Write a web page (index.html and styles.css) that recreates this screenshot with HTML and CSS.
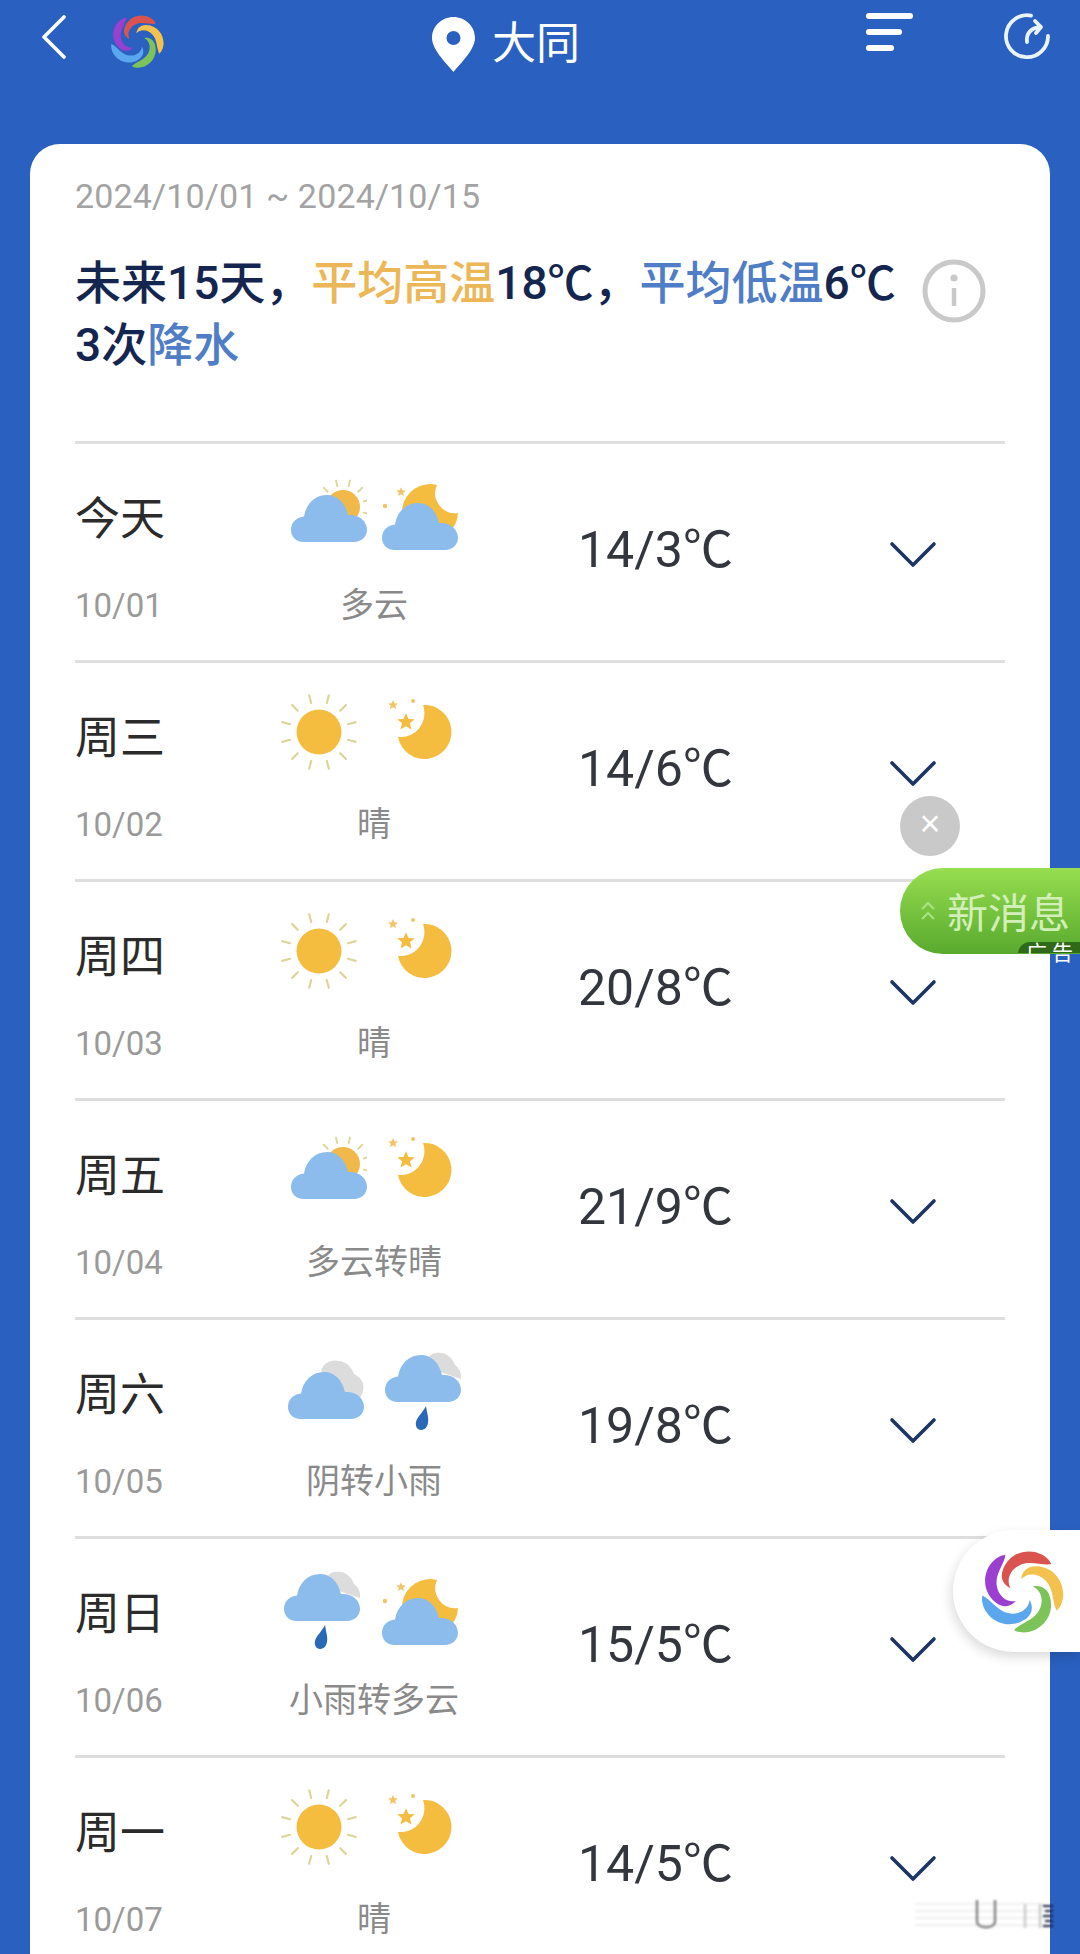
FILE: index.html
```html
<!DOCTYPE html>
<html lang="zh">
<head>
<meta charset="utf-8">
<title>大同 15天天气</title>
<link rel="stylesheet" href="styles.css">
</head>
<body>
<svg class="defs" width="0" height="0" aria-hidden="true">
  <defs>
    <path id="cloud" d="M12.5 47C5 47 0 41.5 0 35C0 27 6 22 13 21.5C15 9 24 0 36 0C46 0 54 7 57 20C68 19 76 26 76 35C76 42 70 47 63 47Z"/>
    <path id="star" d="M0 -8L2.3 -2.8L8 -2.5L3.6 1.2L5 6.8L0 3.8L-5 6.8L-3.6 1.2L-8 -2.5L-2.3 -2.8Z"/>
    <path id="blade" d="M85 -78C62 -126 -28 -132 -55 -62C-65 -36 -52 -16 -33 -8C-46 -30 -36 -60 -8 -74C22 -90 60 -72 85 -78Z"/>
    <g id="swirl">
      <use href="#blade" fill="#d9534f"/>
      <use href="#blade" fill="#f2c14e" transform="rotate(72)"/>
      <use href="#blade" fill="#7cc35a" transform="rotate(144)"/>
      <use href="#blade" fill="#5aa7ee" transform="rotate(216)"/>
      <use href="#blade" fill="#9a3fd0" transform="rotate(288)"/>
    </g>
    <g id="rays">
      <line x1="0" y1="-30" x2="0" y2="-38" transform="rotate(15)"/>
      <line x1="0" y1="-30" x2="0" y2="-38" transform="rotate(45)"/>
      <line x1="0" y1="-30" x2="0" y2="-38" transform="rotate(75)"/>
      <line x1="0" y1="-30" x2="0" y2="-38" transform="rotate(105)"/>
      <line x1="0" y1="-30" x2="0" y2="-38" transform="rotate(135)"/>
      <line x1="0" y1="-30" x2="0" y2="-38" transform="rotate(165)"/>
      <line x1="0" y1="-30" x2="0" y2="-38" transform="rotate(195)"/>
      <line x1="0" y1="-30" x2="0" y2="-38" transform="rotate(225)"/>
      <line x1="0" y1="-30" x2="0" y2="-38" transform="rotate(255)"/>
      <line x1="0" y1="-30" x2="0" y2="-38" transform="rotate(285)"/>
      <line x1="0" y1="-30" x2="0" y2="-38" transform="rotate(315)"/>
      <line x1="0" y1="-30" x2="0" y2="-38" transform="rotate(345)"/>
    </g>
    <symbol id="i-sun" viewBox="0 0 96 96">
      <use href="#rays" transform="translate(48 48)" stroke="#dcd699" stroke-width="2.2" stroke-linecap="round"/>
      <circle cx="48" cy="48" r="22.5" fill="#f5bd40"/>
    </symbol>
    <symbol id="i-moon" viewBox="0 0 96 96">
      <path d="M46 21A27 27 0 1 1 21 53A24 24 0 0 0 46 21Z" fill="#f5bd40"/>
      <use href="#star" transform="translate(29 38) scale(1.1)" fill="#f5bd40"/>
      <use href="#star" transform="translate(16 21) scale(.62)" fill="#f0c566"/>
      <circle cx="36" cy="17" r="2" fill="#f0c566"/>
    </symbol>
    <symbol id="i-cloud-sun" viewBox="0 0 96 96">
      <use href="#rays" transform="translate(72 42) scale(.72)" stroke="#dcd699" stroke-width="2.6" stroke-linecap="round"/>
      <circle cx="72" cy="42" r="17" fill="#f0b94a"/>
      <use href="#cloud" x="20" y="30" fill="#8bbcec"/>
    </symbol>
    <symbol id="i-cloud-moon" viewBox="0 0 96 96">
      <path d="M60 20A28 28 0 1 0 81 48A20 20 0 0 1 60 20Z" fill="#f5bd40"/>
      <use href="#star" transform="translate(24 27) scale(.6)" fill="#f0c566"/>
      <circle cx="8" cy="41" r="2.2" fill="#f0c566"/>
      <use href="#cloud" x="5" y="38" fill="#8bbcec"/>
    </symbol>
    <symbol id="i-overcast" viewBox="0 0 96 96">
      <path d="M50 30C52 22 60 18 68 20C76 21 81 27 83 33C90 36 94 43 92 50C91 56 86 60 80 62L60 50Z" fill="#dcdcdc"/>
      <use href="#cloud" x="17" y="31" fill="#8bbcec"/>
    </symbol>
    <symbol id="i-rain" viewBox="0 0 96 96">
      <path d="M52 16C54 12 60 11 65 12C71 13 76 18 78 24C82 27 85 32 84 38L60 30Z" fill="#dcdcdc"/>
      <use href="#cloud" x="8" y="14" fill="#8bbcec"/>
      <path d="M49 65C50 72 52 77 51 82C50 87 47 89 44 89C41 89 38 86 39 81C40 76 46 71 49 65Z" fill="#2a68b8"/>
    </symbol>
    <symbol id="i-chevron" viewBox="0 0 48 28">
      <path d="M3 3L24 24L45 3" fill="none" stroke="#1d3563" stroke-width="3.6" stroke-linecap="round" stroke-linejoin="round"/>
    </symbol>
  </defs>
</svg>

<header class="topbar">
  <svg class="back" viewBox="0 0 24 44"><path d="M22 2L2 22L22 42"/></svg>
  <svg class="top-logo" viewBox="-130 -130 260 260"><use href="#swirl"/></svg>
  <div class="place">
    <svg class="pin" viewBox="0 0 43 55"><path fill-rule="evenodd" d="M21.5 0C33 0 43 9 43 21C43 32 30 45 21.5 55C13 45 0 32 0 21C0 9 10 0 21.5 0ZM21.5 14A7 7 0 1 0 21.5 28A7 7 0 1 0 21.5 14Z"/></svg>
    <span class="city">大同</span>
  </div>
  <div class="menu"><i class="bar bar-l"></i><i class="bar bar-m"></i><i class="bar bar-s"></i></div>
  <svg class="refresh" viewBox="0 0 48 48"><path d="M28 3.6A21 21 0 1 0 45 24"/><path d="M24 30C23 21 28 16 37 15M32 9L38 15L33 21"/></svg>
</header>

<main class="card">
  <section class="summary">
    <p class="range">2024/10/01 ~ 2024/10/15</p>
    <div class="headline">
      <p class="headline-text">未来15天，<span class="hot">平均高温</span>18℃，<span class="cool">平均低温</span>6℃<br>3次<span class="cool">降水</span></p>
      <svg class="info" viewBox="0 0 64 64"><circle cx="32" cy="32" r="29"/><circle class="info-dot" cx="32" cy="19" r="3.6"/><path d="M32 29V47"/></svg>
    </div>
  </section>

  <ul class="days">
    <li class="day">
      <div class="when"><span class="name">今天</span><span class="date">10/01</span></div>
      <div class="weather"><div class="icons"><svg class="slot"><use href="#i-cloud-sun"/></svg><svg class="slot"><use href="#i-cloud-moon"/></svg></div><span class="desc">多云</span></div>
      <div class="temp">14/3℃</div>
      <svg class="chev"><use href="#i-chevron"/></svg>
    </li>
    <li class="day">
      <div class="when"><span class="name">周三</span><span class="date">10/02</span></div>
      <div class="weather"><div class="icons"><svg class="slot"><use href="#i-sun"/></svg><svg class="slot"><use href="#i-moon"/></svg></div><span class="desc">晴</span></div>
      <div class="temp">14/6℃</div>
      <svg class="chev"><use href="#i-chevron"/></svg>
    </li>
    <li class="day">
      <div class="when"><span class="name">周四</span><span class="date">10/03</span></div>
      <div class="weather"><div class="icons"><svg class="slot"><use href="#i-sun"/></svg><svg class="slot"><use href="#i-moon"/></svg></div><span class="desc">晴</span></div>
      <div class="temp">20/8℃</div>
      <svg class="chev"><use href="#i-chevron"/></svg>
    </li>
    <li class="day">
      <div class="when"><span class="name">周五</span><span class="date">10/04</span></div>
      <div class="weather"><div class="icons"><svg class="slot"><use href="#i-cloud-sun"/></svg><svg class="slot"><use href="#i-moon"/></svg></div><span class="desc">多云转晴</span></div>
      <div class="temp">21/9℃</div>
      <svg class="chev"><use href="#i-chevron"/></svg>
    </li>
    <li class="day">
      <div class="when"><span class="name">周六</span><span class="date">10/05</span></div>
      <div class="weather"><div class="icons"><svg class="slot"><use href="#i-overcast"/></svg><svg class="slot"><use href="#i-rain"/></svg></div><span class="desc">阴转小雨</span></div>
      <div class="temp">19/8℃</div>
      <svg class="chev"><use href="#i-chevron"/></svg>
    </li>
    <li class="day">
      <div class="when"><span class="name">周日</span><span class="date">10/06</span></div>
      <div class="weather"><div class="icons"><svg class="slot slot-nudge"><use href="#i-rain"/></svg><svg class="slot"><use href="#i-cloud-moon"/></svg></div><span class="desc">小雨转多云</span></div>
      <div class="temp">15/5℃</div>
      <svg class="chev"><use href="#i-chevron"/></svg>
    </li>
    <li class="day">
      <div class="when"><span class="name">周一</span><span class="date">10/07</span></div>
      <div class="weather"><div class="icons"><svg class="slot"><use href="#i-sun"/></svg><svg class="slot"><use href="#i-moon"/></svg></div><span class="desc">晴</span></div>
      <div class="temp">14/5℃</div>
      <svg class="chev"><use href="#i-chevron"/></svg>
    </li>
  </ul>
</main>

<div class="ad-close">×</div>
<div class="ad-pill">
  <svg class="ad-arrows" viewBox="0 0 16 24"><path d="M2 10L8 4L14 10M2 20L8 14L14 20"/></svg>
  <span class="ad-text">新消息</span>
  <span class="ad-tag">广告</span>
</div>
<div class="float-logo"><svg class="float-swirl" viewBox="-130 -130 260 260"><use href="#swirl"/></svg></div>
<svg class="smear" viewBox="0 0 140 40">
  <path class="smear-f" d="M0 6H130M0 13H130M0 20H130M0 27H130"/>
  <path class="smear-u" d="M62 2V24C63 31 79 31 80 24V2"/>
  <path class="smear-s" d="M110 6V30M125 6V30"/>
  <path class="smear-k" d="M128 8H138M130 13H138M128 18H138M130 23H138M128 28H138"/>
</svg>
</body>
</html>
```

FILE: styles.css
```css
* { box-sizing: border-box; }
html, body { margin: 0; padding: 0; }
body {
  position: relative;
  width: 1080px;
  height: 1954px;
  overflow: hidden;
  background: #2a60c0;
  font-family: Roboto, "Noto Sans CJK SC", "Noto Sans", sans-serif;
}
p, ul { margin: 0; padding: 0; }
ul { list-style: none; }
.defs { position: absolute; }

.topbar {
  display: flex;
  align-items: flex-start;
  height: 144px;
  padding: 15px 0 0 42px;
}
.back { width: 24px; height: 44px; fill: none; stroke: #fff; stroke-width: 3.6; stroke-linecap: round; stroke-linejoin: round; }
.top-logo { width: 58px; height: 58px; margin: -3px 0 0 42px; }
.place { display: flex; align-items: center; margin: 2px 0 0 266px; width: 434px; }
.pin { width: 43px; height: 55px; fill: #fff; }
.city { margin-left: 17px; font-size: 44px; line-height: 55px; color: #fff; }
.menu { display: flex; flex-direction: column; gap: 10px; margin-top: -2px; width: 100px; }
.bar { display: block; height: 6px; border-radius: 3px; background: #fff; }
.bar-l { width: 47px; }
.bar-m { width: 36px; }
.bar-s { width: 28px; }
.refresh { width: 48px; height: 48px; margin: -3px 0 0 37px; fill: none; stroke: #eaf4ff; stroke-width: 3.8; stroke-linecap: round; stroke-linejoin: round; }

.card {
  width: 1020px;
  height: 1900px;
  margin-left: 30px;
  padding: 0 45px;
  background: #fff;
  border-radius: 30px 30px 0 0;
}
.summary { height: 297px; padding-top: 30px; }
.range { font-size: 34px; line-height: 44px; letter-spacing: .15px; color: #a3a3a3; white-space: nowrap; }
.headline { display: flex; justify-content: space-between; align-items: flex-start; margin-top: 34px; }
.headline-text { font-size: 46px; line-height: 62px; font-weight: 500; color: #14264f; white-space: nowrap; }
.hot { color: #ecb757; }
.cool { color: #4f7dc6; }
.info { width: 64px; height: 64px; margin: 7px 19px 0 0; fill: none; stroke: #c9c9c9; stroke-width: 5; }
.info path { stroke-width: 4.5; }
.info-dot { fill: #c9c9c9; stroke: none; }

.day {
  display: grid;
  grid-template-columns: 180px 238px 1fr 60px;
  height: 219px;
  border-top: 3px solid #dedede;
}
.when { display: flex; flex-direction: column; padding-top: 46px; }
.name { font-size: 45px; line-height: 60px; color: #2b2b2b; }
.date { margin-top: 34px; font-size: 33px; line-height: 44px; color: #9a9a9a; }
.weather { display: flex; flex-direction: column; align-items: center; }
.icons { display: flex; gap: 10px; height: 96px; margin: 21px 4px 0 0; }
.slot { width: 96px; height: 96px; overflow: visible; }
.slot-nudge { transform: translateX(5px); }
.desc { margin-top: 22px; font-size: 34px; line-height: 44px; color: #8a8a8a; white-space: nowrap; }
.temp { padding: 73px 0 0 85px; font-size: 50px; line-height: 66px; color: #33373d; white-space: nowrap; }
.chev { width: 48px; height: 28px; margin: 97px 0 0 -56px; }

.ad-close {
  position: absolute;
  left: 900px;
  top: 796px;
  width: 60px;
  height: 60px;
  border-radius: 50%;
  background: #c9c9c9;
  color: #fff;
  font: 36px/56px "Liberation Sans", sans-serif;
  text-align: center;
}
.ad-pill {
  position: absolute;
  left: 900px;
  top: 868px;
  display: flex;
  align-items: center;
  width: 180px;
  height: 86px;
  padding-left: 20px;
  border-radius: 43px 0 0 43px;
  background: linear-gradient(#97de50, #58a92e);
}
.ad-arrows { width: 16px; height: 24px; fill: none; stroke: #a9e384; stroke-width: 2; }
.ad-text { margin: 6px 0 0 11px; font-size: 41px; line-height: 50px; color: #d3efb9; white-space: nowrap; }
.ad-tag {
  position: absolute;
  left: 118px;
  top: 74px;
  width: 62px;
  height: 23px;
  padding-left: 8px;
  border-radius: 12px 0 0 0;
  background: linear-gradient(#2f6a18 50%, transparent 50%);
  font-size: 21px;
  line-height: 23px;
  letter-spacing: 5px;
  color: #fff;
  white-space: nowrap;
}
.float-logo {
  position: absolute;
  left: 953px;
  top: 1530px;
  display: flex;
  align-items: center;
  width: 127px;
  height: 122px;
  padding-left: 24px;
  border-radius: 61px 0 0 61px;
  background: #fff;
  box-shadow: -2px 5px 12px rgba(0, 0, 0, .14);
}
.float-swirl { width: 90px; height: 90px; }
.smear { position: absolute; left: 915px; top: 1898px; width: 140px; height: 40px; fill: none; filter: blur(1px); }
.smear-f { stroke: #f3f3f3; stroke-width: 3; }
.smear-u { stroke: #444; stroke-opacity: .65; stroke-width: 2.4; }
.smear-s { stroke: #ccc; stroke-width: 2.5; }
.smear-k { stroke: #16213d; stroke-width: 2; }
```
